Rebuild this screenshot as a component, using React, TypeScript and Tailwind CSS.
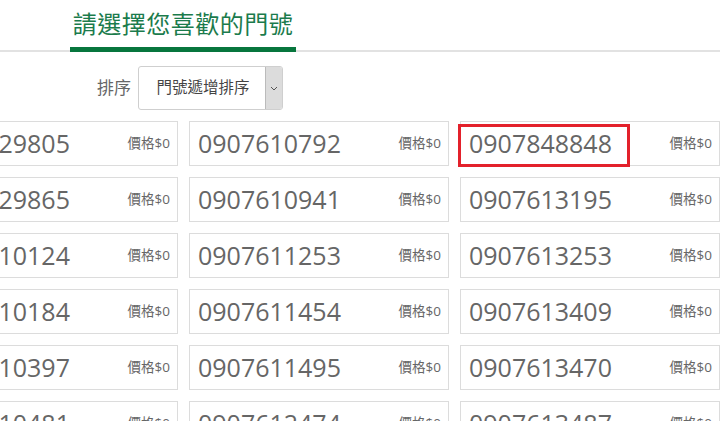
const numbers: [string, string, string][] = [
  ["0907629805", "0907610792", "0907848848"],
  ["0907629865", "0907610941", "0907613195"],
  ["0907610124", "0907611253", "0907613253"],
  ["0907610184", "0907611454", "0907613409"],
  ["0907610397", "0907611495", "0907613470"],
  ["0907610481", "0907612474", "0907613487"],
];

const font = { fontFamily: '"Open Sans", "Noto Sans CJK TC", sans-serif' };

function NumberCard({ num, marked }: { num: string; marked?: boolean }) {
  return (
    <div className="relative flex h-[45px] items-center justify-between border border-[#dcdcdc] bg-white pl-[8px] pr-[7px]">
      <span className="text-[25px] leading-none text-[#666]">{num}</span>
      <span className="text-[13.5px] text-[#666]">價格$0</span>
      {/* red annotation box */}
      {marked && (
        <div className="absolute left-[-3px] top-[2px] h-[43px] w-[172px] border-[3px] border-[#e3212b]" />
      )}
    </div>
  );
}

export default function App() {
  return (
    <div
      className="h-[421px] w-[720px] overflow-hidden bg-white"
      style={{ fontFamily: '"Open Sans", "Noto Sans CJK TC", sans-serif' }}
    >
      {/* TITLE */}
      <div className="border-b-2 border-[#e2e2e2]">
        <div className="ml-[70px] w-[226px] pt-[8px]">
          <h1 className="pb-[8px] text-center text-[24px] leading-[31px] tracking-[0.5px] text-[#1b7b4c]">
            請選擇您喜歡的門號
          </h1>
          <div className="-mb-[2px] h-[5px] bg-[#07763d]" />
        </div>
      </div>

      {/* SORT */}
      <div className="mt-[14px] flex items-center pl-[97px]">
        <span className="mr-[7px] text-[17px] text-[#666]">排序</span>
        <div className="flex h-[44px] w-[145px] overflow-hidden rounded-[3px] border border-[#cfcfcf]">
          <div className="flex flex-1 items-center justify-center pl-[2px] text-[15.5px] text-[#444]">門號遞增排序</div>
          <div className="flex w-[17px] items-center justify-center border-l border-[#bbb] bg-[#dcdcdc]">
            <svg width="8" height="5" viewBox="0 0 8 5" fill="none">
              <path d="M1 1l3 3 3-3" stroke="#555" strokeWidth="1" />
            </svg>
          </div>
        </div>
      </div>

      {/* NUMBERS */}
      <div className="ml-[-82px] mt-[11px] grid grid-cols-[260px_260px_260px] gap-[11px]" style={font}>
        {numbers.map((row, r) =>
          row.map((n, c) => <NumberCard key={`${r}-${c}`} num={n} marked={r === 0 && c === 2} />)
        )}
      </div>
    </div>
  );
}
